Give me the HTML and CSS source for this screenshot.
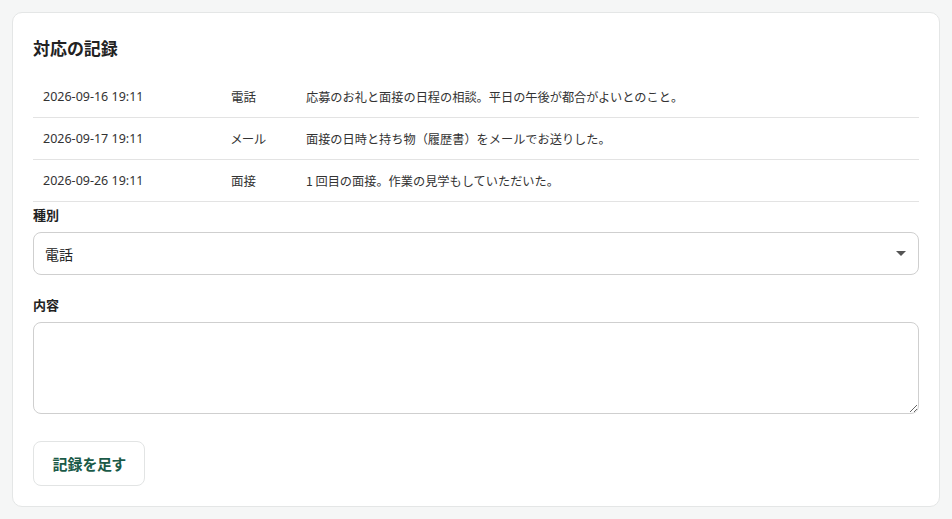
FILE: index.html
```html
<!DOCTYPE html>
<html lang="ja">
<head>
<meta charset="utf-8">
<link rel="stylesheet" href="styles.css">
</head>
<body>
<section class="card">
  <h2 class="title">対応の記録</h2>
  <div class="log">
    <div class="row"><span class="date">2026-09-16 19:11</span><span class="kind">電話</span><span class="note">応募のお礼と面接の日程の相談。平日の午後が都合がよいとのこと。</span></div>
    <div class="row"><span class="date">2026-09-17 19:11</span><span class="kind">メール</span><span class="note">面接の日時と持ち物（履歴書）をメールでお送りした。</span></div>
    <div class="row"><span class="date">2026-09-26 19:11</span><span class="kind">面接</span><span class="note">1 回目の面接。作業の見学もしていただいた。</span></div>
  </div>
  <label class="label" for="kind">種別</label>
  <div class="select-wrap">
    <select id="kind" class="select">
      <option>電話</option>
      <option>メール</option>
      <option>面接</option>
    </select>
    <span class="caret"></span>
  </div>
  <label class="label label-gap" for="note">内容</label>
  <textarea id="note" class="textarea"></textarea>
  <button class="btn" type="button">記録を足す</button>
</section>
</body>
</html>
```
FILE: styles.css
```css
html, body { margin: 0; padding: 0; }
body {
  background: #f5f6f6;
  padding: 12px;
  font-family: "Noto Sans", "Noto Sans CJK JP", sans-serif;
  color: #222;
}
.card {
  background: #fff;
  border: 1px solid #e4e6e6;
  border-radius: 10px;
  padding: 20px;
  display: flex;
  flex-direction: column;
  align-items: flex-start;
}
.title {
  margin: 0 0 12px;
  font-size: 17px;
  line-height: 31px;
  font-weight: 700;
  color: #222;
  font-feature-settings: "palt";
}
.log { align-self: stretch; display: flex; flex-direction: column; }
.row {
  display: grid;
  grid-template-columns: 188px 85px 1fr;
  align-items: center;
  height: 41px;
  border-bottom: 1px solid #e3e3e3;
  font-size: 12.2px;
  color: #333;
}
.date { padding-left: 10px; font-size: 12.5px; font-family: "Noto Sans", sans-serif; }
.kind { padding-left: 10px; font-size: 12.5px; font-feature-settings: "palt"; }
.note { font-family: "Noto Sans CJK JP", sans-serif; }
.label {
  font-size: 13px;
  font-weight: 700;
  line-height: 22px;
  padding-top: 2px;
  margin-bottom: 6px;
  color: #222;
}
.label-gap { margin-top: 19px; padding-top: 0; margin-bottom: 6px; }
.select-wrap { position: relative; align-self: stretch; }
.select {
  appearance: none;
  -webkit-appearance: none;
  width: 100%;
  height: 43px;
  box-sizing: border-box;
  border: 1px solid #cfcfcf;
  border-radius: 8px;
  background: #fff;
  padding: 0 11px;
  font-family: "Noto Sans CJK JP", sans-serif;
  font-size: 14px;
  color: #222;
}
.caret {
  position: absolute;
  right: 13px;
  top: 19px;
  width: 0;
  height: 0;
  border-left: 5px solid transparent;
  border-right: 5px solid transparent;
  border-top: 5px solid #555;
  pointer-events: none;
}
.textarea {
  align-self: stretch;
  box-sizing: border-box;
  height: 92px;
  border: 1px solid #cfcfcf;
  border-radius: 8px;
  padding: 8px 11px;
  font-family: "Noto Sans CJK JP", sans-serif;
  font-size: 14px;
  margin: 0;
}
.btn {
  margin-top: 27px;
  height: 45px;
  width: 112px;
  box-sizing: border-box;
  background: #fff;
  border: 1px solid #e2e4e4;
  border-radius: 8px;
  font-family: "Noto Sans CJK JP", sans-serif;
  font-feature-settings: "palt";
  font-size: 15px;
  font-weight: 700;
  color: #1b5a48;
  padding: 0;
}
```
